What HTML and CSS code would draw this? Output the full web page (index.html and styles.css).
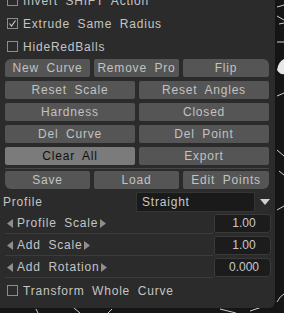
FILE: index.html
```html
<!DOCTYPE html>
<html>
<head>
<meta charset="utf-8">
<link rel="stylesheet" href="styles.css">
</head>
<body>
<svg class="viewport" width="284" height="313" viewBox="0 0 284 313">
  <g stroke="#cfcfcf" stroke-width="1" fill="none">
    <path d="M277 7 L284 5"/>
    <path d="M277 16 L284 20"/>
    <path d="M279 24 L284 23"/>
    <path d="M277 42 L284 42"/>
    <path d="M277 96 L284 93"/>
    <path d="M277 150 L284 156"/>
    <path d="M279 171 L284 175"/>
    <path d="M277 210 L284 206"/>
    <path d="M277 302 Q280 296 284 294"/>
    <path d="M36 309 L38 313"/>
    <path d="M74 308 L80 313"/>
    <path d="M112 309 L108 313"/>
    <path d="M220 309 L236 313"/>
    <path d="M250 311 L262 307"/>
  </g>
  <path d="M277 70 Q278 62 284 59 L284 74 Q280 75 277 70 Z" fill="#e6e6e6"/>
</svg>
<div class="panel">
  <div class="check-row"><span class="box"></span><span class="lbl">Invert SHIFT Action</span></div>
  <div class="check-row"><span class="box"><svg width="11" height="11" viewBox="0 0 11 11"><path d="M2.5 5.5 L4.5 8 L8.5 2.5" stroke="#c8c8c8" stroke-width="1.2" fill="none"/></svg></span><span class="lbl">Extrude Same Radius</span></div>
  <div class="check-row"><span class="box"></span><span class="lbl">HideRedBalls</span></div>

  <div class="buttons">
    <div class="row three">
      <div class="btn tl">New Curve</div>
      <div class="btn">Remove Pro</div>
      <div class="btn tr">Flip</div>
    </div>
    <div class="row two">
      <div class="btn">Reset Scale</div>
      <div class="btn">Reset Angles</div>
    </div>
    <div class="row two">
      <div class="btn">Hardness</div>
      <div class="btn">Closed</div>
    </div>
    <div class="row two">
      <div class="btn">Del Curve</div>
      <div class="btn">Del Point</div>
    </div>
    <div class="row two">
      <div class="btn active">Clear All</div>
      <div class="btn">Export</div>
    </div>
  </div>
  <div class="sep"></div>
  <div class="row three saverow">
    <div class="btn bl">Save</div>
    <div class="btn">Load</div>
    <div class="btn br">Edit Points</div>
  </div>

  <div class="profile">
    <span class="plabel">Profile</span>
    <div class="select"><span>Straight</span></div>
    <svg class="arrow" width="10" height="7" viewBox="0 0 10 7"><path d="M0 0 H10 L5 6 Z" fill="#d0d0d0"/></svg>
  </div>

  <div class="slider">
    <div class="slabel"><svg class="tri" width="6" height="9" viewBox="0 0 6 9"><path d="M6 0 V9 L0 4.5 Z" fill="#8e8e8e"/></svg><span>Profile Scale</span><svg class="tri" width="6" height="9" viewBox="0 0 6 9"><path d="M0 0 V9 L6 4.5 Z" fill="#8e8e8e"/></svg></div>
    <div class="val">1.00</div>
  </div>
  <div class="slider">
    <div class="slabel"><svg class="tri" width="6" height="9" viewBox="0 0 6 9"><path d="M6 0 V9 L0 4.5 Z" fill="#8e8e8e"/></svg><span>Add Scale</span><svg class="tri" width="6" height="9" viewBox="0 0 6 9"><path d="M0 0 V9 L6 4.5 Z" fill="#8e8e8e"/></svg></div>
    <div class="val">1.00</div>
  </div>
  <div class="slider">
    <div class="slabel"><svg class="tri" width="6" height="9" viewBox="0 0 6 9"><path d="M6 0 V9 L0 4.5 Z" fill="#8e8e8e"/></svg><span>Add Rotation</span><svg class="tri" width="6" height="9" viewBox="0 0 6 9"><path d="M0 0 V9 L6 4.5 Z" fill="#8e8e8e"/></svg></div>
    <div class="val">0.000</div>
  </div>

  <div class="check-row last"><span class="box"></span><span class="lbl">Transform Whole Curve</span></div>
</div>
</body>
</html>
```

FILE: styles.css
```css
html, body {
  margin: 0;
  padding: 0;
}
body {
  width: 284px;
  height: 313px;
  overflow: hidden;
  background: #151515;
  position: relative;
  font-family: "Liberation Sans", Arial, sans-serif;
  font-size: 12px;
  letter-spacing: 0.8px;
  word-spacing: 3.5px;
  color: #c4c4c4;
}
.viewport {
  position: absolute;
  left: 0;
  top: 0;
}
.panel {
  position: relative;
  width: 270px;
  margin-top: -11px;
  padding: 0 0 5px 5px;
  background: #2b2b2b;
  border-bottom-right-radius: 6px;
  display: flex;
  flex-direction: column;
}
.check-row {
  height: 23px;
  display: flex;
  align-items: center;
  padding-left: 2px;
}
.check-row.last {
  height: 25px;
}
.box {
  width: 11px;
  height: 11px;
  box-sizing: border-box;
  border: 1px solid #8c8c8c;
  margin-right: 5px;
  position: relative;
  flex: none;
}
.box svg {
  position: absolute;
  left: -1px;
  top: -1px;
}
.lbl {
  line-height: 14px;
  white-space: nowrap;
}
.buttons {
  margin-top: 1px;
  display: flex;
  flex-direction: column;
  gap: 4px;
  width: 264px;
}
.row {
  display: grid;
  height: 18px;
  width: 264px;
}
.row.three {
  grid-template-columns: 85px 85px 86px;
  column-gap: 4px;
}
.row.two {
  grid-template-columns: 130px 130px;
  column-gap: 4px;
}
.btn {
  background: #555555;
  border-radius: 2px;
  display: flex;
  align-items: center;
  justify-content: center;
  color: #c2c2c2;
  white-space: nowrap;
  overflow: hidden;
}
.btn.tl { border-top-left-radius: 6px; }
.btn.tr { border-top-right-radius: 6px; }
.btn.bl { border-bottom-left-radius: 6px; }
.btn.br { border-bottom-right-radius: 6px; }
.btn.active {
  background: #7b7b7b;
  color: #101010;
}
.sep {
  width: 264px;
  height: 1px;
  background: #474747;
  margin-top: 3px;
  margin-bottom: 2px;
}
.profile {
  margin-top: 3px;
  height: 20px;
  display: flex;
  align-items: center;
}
.plabel {
  width: 133px;
  margin-left: -2px;
}
.select {
  width: 119px;
  height: 20px;
  box-sizing: border-box;
  background: #1a1a1a;
  border: 1px solid #353535;
  display: flex;
  align-items: center;
  padding-left: 5px;
  color: #c8c8c8;
}
.arrow {
  margin-left: 5px;
  margin-top: 1px;
}
.slider {
  height: 22px;
  display: flex;
  align-items: center;
}
.slabel {
  width: 208px;
  height: 22px;
  box-sizing: border-box;
  border-bottom: 1px solid #3c3c3c;
  display: flex;
  align-items: center;
  padding-left: 2px;
  padding-top: 1px;
  white-space: nowrap;
}
.tri {
  flex: none;
}
.slabel span {
  margin: 0 2px 0 4px;
}
.val {
  width: 57px;
  height: 19px;
  box-sizing: border-box;
  margin-left: 1px;
  background: #1c1c1c;
  border: 1px solid #3a3a3a;
  border-radius: 2px 4px 4px 2px;
  display: flex;
  align-items: center;
  justify-content: center;
  padding-left: 3px;
  color: #c8c8c8;
  letter-spacing: 0;
}
```
